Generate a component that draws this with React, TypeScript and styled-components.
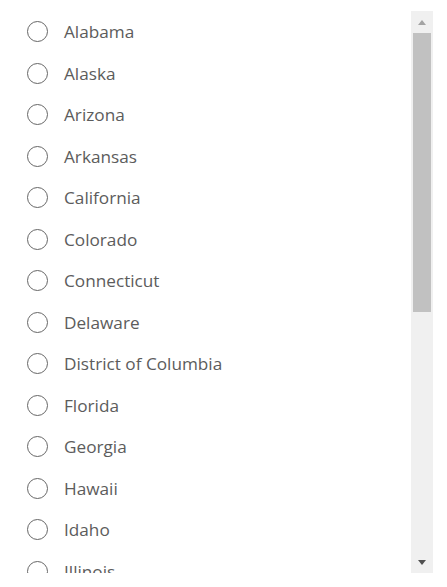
import styled, { createGlobalStyle } from 'styled-components'

const states = [
  'Alabama',
  'Alaska',
  'Arizona',
  'Arkansas',
  'California',
  'Colorado',
  'Connecticut',
  'Delaware',
  'District of Columbia',
  'Florida',
  'Georgia',
  'Hawaii',
  'Idaho',
  'Illinois',
]

const GlobalStyle = createGlobalStyle`
  html, body {
    margin: 0;
    padding: 0;
    background: #ffffff;
  }
  body {
    font-family: "Open Sans", "Noto Sans", sans-serif;
  }
`

const Frame = styled.div`
  display: flex;
  height: 562px;
  margin: 11px 14px 0 0;
`

const List = styled.div`
  flex: 1;
  min-width: 0;
  overflow: hidden;
`

const Option = styled.label`
  display: flex;
  align-items: center;
  height: 41.5px;
  padding-left: 27px;
  gap: 16px;
  cursor: pointer;
`

const Circle = styled.span`
  box-sizing: border-box;
  width: 21px;
  height: 21px;
  border-radius: 50%;
  border: 1.5px solid #666666;
  flex-shrink: 0;
`

const Text = styled.span`
  font-size: 17.2px;
  color: #5c5c5c;
  white-space: nowrap;
`

const Scrollbar = styled.div`
  width: 22px;
  display: flex;
  flex-direction: column;
  background: #f0f0f0;
`

const ArrowButton = styled.div`
  height: 22px;
  display: flex;
  align-items: center;
  justify-content: center;
`

const Track = styled.div`
  flex: 1;
  padding: 0 2px;
`

const Thumb = styled.div`
  height: 279px;
  background: #c1c1c1;
`

function Arrow({ up, color }: { up?: boolean; color: string }) {
  return (
    <svg width="8" height="5" viewBox="0 0 8 5">
      <path d={up ? 'M0 5 L4 0 L8 5 Z' : 'M0 0 L8 0 L4 5 Z'} fill={color} />
    </svg>
  )
}

export default function App() {
  return (
    <>
      <GlobalStyle />
      <Frame>
        <List>
          {states.map((s) => (
            <Option key={s}>
              <Circle />
              <Text>{s}</Text>
            </Option>
          ))}
        </List>
        <Scrollbar>
          <ArrowButton>
            <Arrow up color="#a3a3a3" />
          </ArrowButton>
          <Track>
            <Thumb />
          </Track>
          <ArrowButton>
            <Arrow color="#505050" />
          </ArrowButton>
        </Scrollbar>
      </Frame>
    </>
  )
}
